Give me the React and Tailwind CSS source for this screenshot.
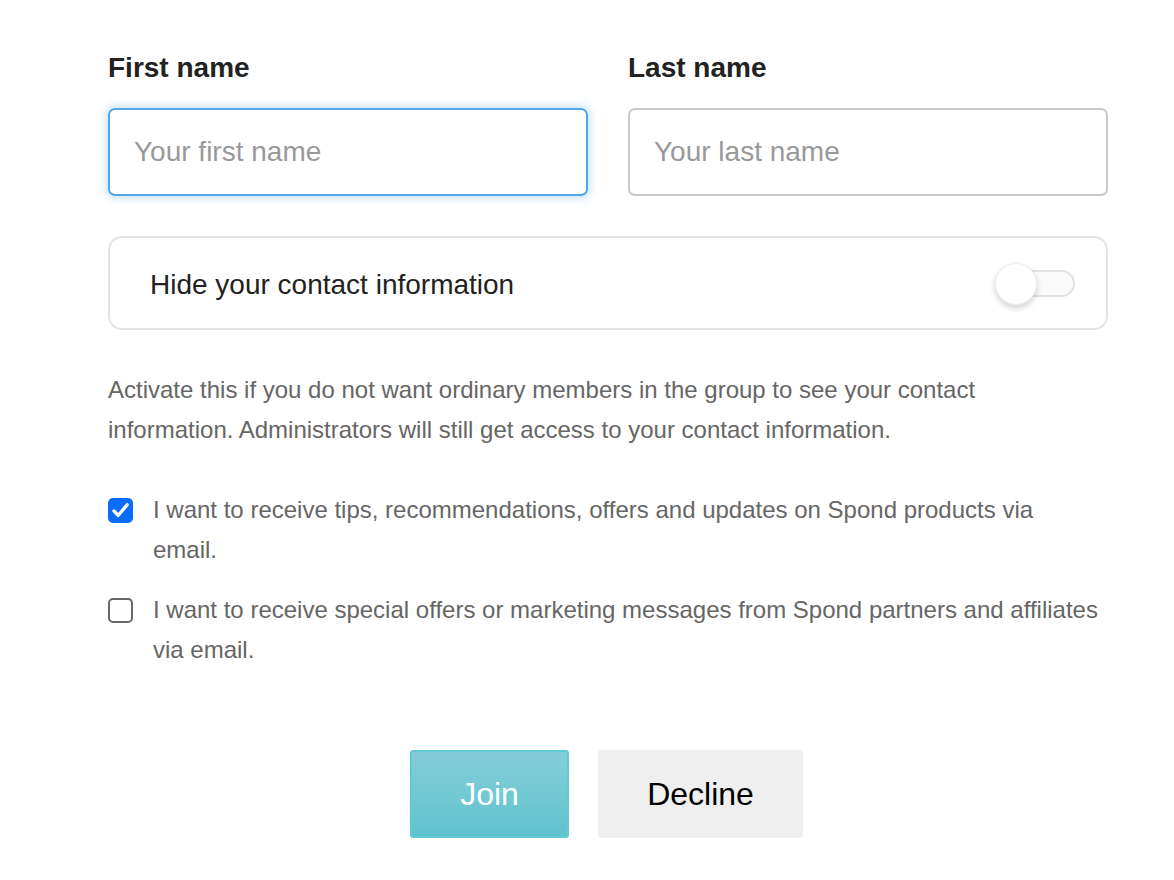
import { useState } from "react"

const font = { fontFamily: '"Liberation Sans", Arial, Helvetica, sans-serif' }

function Field({ label, placeholder, focused }) {
  return (
    <div className="flex flex-1 flex-col">
      <label className="mb-[24px] text-[28px] font-bold leading-[32px] text-[#222]">{label}</label>
      <input
        placeholder={placeholder}
        className={`h-[88px] w-full rounded-[7px] border-2 bg-white px-[24px] text-[28px] text-[#222] outline-none placeholder:text-[#999] ${
          focused
            ? "border-[#55a8e6] shadow-[0_0_8px_2px_rgba(85,168,230,0.35)]"
            : "border-[#c8c8c8]"
        }`}
      />
    </div>
  )
}

function Check({ checked, children }) {
  return (
    <label className="flex items-start gap-[20px]">
      <span
        className={`mt-[8px] flex h-[25px] w-[25px] shrink-0 items-center justify-center rounded-[5px] ${
          checked ? "bg-[#0b6cf5]" : "border-2 border-[#666] bg-white"
        }`}
      >
        {checked && (
          <svg viewBox="0 0 24 24" className="h-[21px] w-[21px]" fill="none" stroke="white" strokeWidth="3.8" strokeLinecap="round" strokeLinejoin="round">
            <path d="M4.5 12.5l4.8 5.2L19.5 5.5" />
          </svg>
        )}
      </span>
      <span className="max-w-[948px] text-[24px] leading-[40px] text-[#666]">{children}</span>
    </label>
  )
}

export default function App() {
  const [hidden, setHidden] = useState(false)
  return (
    <div className="min-h-[880px] bg-white" style={font}>
      <div className="ml-[108px] w-[1000px] pt-[52px]">
        <div className="flex gap-[40px]">
          <Field label="First name" placeholder="Your first name" focused />
          <Field label="Last name" placeholder="Your last name" />
        </div>

        {/* Hide contact toggle */}
        <div className="mt-[40px] flex h-[94px] items-center justify-between rounded-[14px] border-2 border-[#e4e4e4] pl-[40px] pr-[31px]">
          <span className="pt-[4px] text-[28px] text-[#222]">Hide your contact information</span>
          <button
            onClick={() => setHidden(!hidden)}
            className="relative h-[27px] w-[78px] rounded-full border-2 border-[#e2e2e2] bg-[#fafafa]"
          >
            <span className="absolute -left-[4px] -top-[9px] h-[42px] w-[42px] rounded-full border border-[#eee] bg-white shadow-[0_3px_6px_rgba(0,0,0,0.18)]" />
          </button>
        </div>

        <p className="mt-[40px] max-w-[980px] text-[24px] leading-[40px] text-[#666]">
          Activate this if you do not want ordinary members in the group to see your contact information. Administrators will still get access to your contact information.
        </p>

        <div className="mt-[40px] flex flex-col gap-[20px]">
          <Check checked>
            I want to receive tips, recommendations, offers and updates on Spond products via email.
          </Check>
          <Check>
            I want to receive special offers or marketing messages from Spond partners and affiliates via email.
          </Check>
        </div>

        <div className="mt-[80px] flex justify-center gap-[29px] pr-[3px]">
          <button className="h-[88px] w-[159px] rounded-[3px] border-2 border-[#62cad7] bg-gradient-to-b from-[#82ced9] to-[#60c3cf] text-[32px] text-white">
            Join
          </button>
          <button className="h-[88px] w-[205px] rounded-[3px] bg-[#efefef] text-[32px] text-black">
            Decline
          </button>
        </div>
      </div>
    </div>
  )
}
